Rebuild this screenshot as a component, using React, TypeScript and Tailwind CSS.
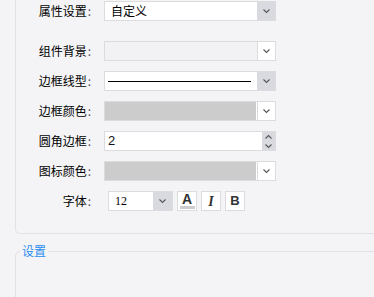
import React from "react";

const font = { fontFamily: '"Noto Sans CJK SC", "Noto Sans", sans-serif' };

function Chevron({ up = false }: { up?: boolean }) {
  return (
    <svg width="9" height="6" viewBox="0 0 9 6" fill="none">
      <path d={up ? "M1.5 4.5l3-3 3 3" : "M1.5 1.5l3 3 3-3"} stroke="#555" strokeWidth="1.1" />
    </svg>
  );
}

function Label({ text }: { text: string }) {
  return (
    <div className="w-[76px] flex justify-end items-center text-[12px] text-black leading-none pr-[1px]">
      {text}
      <span className="text-[#5a4a6a] ml-[1px]">:</span>
    </div>
  );
}

function Row({ label, children, className = "" }: { label: string; children: React.ReactNode; className?: string }) {
  return (
    <div className={`flex items-center h-[20px] gap-[12px] ${className}`}>
      <Label text={label} />
      {children}
    </div>
  );
}

export default function App() {
  return (
    <div className="w-[374px] h-[297px] overflow-hidden bg-[#f4f4f6]" style={font}>
      {/* upper panel */}
      <div className="ml-[15px] w-[420px] border-l border-b border-[#e2e2e6] rounded-bl-[5px] pt-[1px] pb-[22px]">
        <div className="flex flex-col gap-[10px]">
          <Row label="属性设置" className="mb-[10px]">
            <div className="w-[172px] h-[20px] flex border border-[#dcdcdf] bg-white">
              <div className="flex-1 pl-[6px] text-[12px] leading-[18px] text-black">自定义</div>
              <div className="w-[18px] bg-[#d9dadf] flex items-center justify-center"><Chevron /></div>
            </div>
          </Row>
          <Row label="组件背景">
            <div className="w-[172px] h-[20px] flex border border-[#dcdcdf] bg-[#f2f2f4]">
              <div className="flex-1" />
              <div className="w-[18px] bg-white border-l border-[#dcdcdf] flex items-center justify-center"><Chevron /></div>
            </div>
          </Row>
          <Row label="边框线型">
            <div className="w-[172px] h-[20px] flex border border-[#dcdcdf] bg-white">
              <div className="flex-1 flex items-center pl-[3px] pr-[6px]">
                <div className="w-full h-px bg-black" />
              </div>
              <div className="w-[18px] bg-[#d9dadf] flex items-center justify-center"><Chevron /></div>
            </div>
          </Row>
          <Row label="边框颜色">
            <div className="w-[172px] h-[20px] flex border border-[#dcdcdf] bg-white">
              <div className="flex-1 bg-[#cccccc] mr-[1px]" />
              <div className="w-[18px] bg-white border-l border-[#dcdcdf] flex items-center justify-center"><Chevron /></div>
            </div>
          </Row>
          <Row label="圆角边框">
            <div className="w-[172px] h-[20px] flex border border-[#dcdcdf] bg-white">
              <div className="flex-1 pl-[3px] text-[13px] leading-[18px] text-[#111]" style={{ fontFamily: '"Liberation Sans", sans-serif' }}>2</div>
              <div className="w-[13px] bg-[#d9dadf] flex flex-col items-center justify-center gap-[3px]">
                <Chevron up />
                <Chevron />
              </div>
            </div>
          </Row>
          <Row label="图标颜色">
            <div className="w-[172px] h-[20px] flex border border-[#dcdcdf] bg-white">
              <div className="flex-1 bg-[#cccccc] mr-[1px]" />
              <div className="w-[18px] bg-white border-l border-[#dcdcdf] flex items-center justify-center"><Chevron /></div>
            </div>
          </Row>
          <Row label="字体">
            <div className="flex items-center gap-[4px] ml-[4px]">
              <div className="w-[65px] h-[20px] flex border border-[#dcdcdf] bg-white">
                <div className="flex-1 pl-[6px] text-[12px] leading-[18px] text-black" style={{ fontFamily: '"Liberation Serif", serif' }}>12</div>
                <div className="w-[19px] bg-[#d9dadf] flex items-center justify-center"><Chevron /></div>
              </div>
              <div className="w-[20px] h-[20px] border border-[#dcdcdf] bg-white flex flex-col items-center justify-center">
                <span className="text-[14px] font-bold leading-[12px] text-[#333]" style={{ fontFamily: '"Liberation Sans", sans-serif' }}>A</span>
                <div className="w-[15px] h-[3px] bg-[#cccccc] mt-[1px]" />
              </div>
              <div className="w-[20px] h-[20px] border border-[#dcdcdf] bg-white flex items-center justify-center text-[14px] italic font-bold text-[#333]" style={{ fontFamily: '"Liberation Serif", serif' }}>
                I
              </div>
              <div className="w-[20px] h-[20px] border border-[#dcdcdf] bg-white flex items-center justify-center text-[13px] font-bold text-[#333]" style={{ fontFamily: '"Liberation Sans", sans-serif' }}>
                B
              </div>
            </div>
          </Row>
        </div>
      </div>

      {/* settings panel */}
      <fieldset className="ml-[15px] mt-[10px] w-[420px] h-[80px] border border-[#e2e2e6] rounded-tl-[5px] p-0 m-0">
        <legend className="ml-[4px] px-[2px] text-[12px] leading-[14px] text-[#2a8cf0]">设置</legend>
      </fieldset>
    </div>
  );
}
